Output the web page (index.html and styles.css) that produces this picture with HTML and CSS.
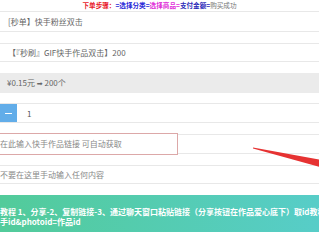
FILE: index.html
```html
<!DOCTYPE html>
<html lang="zh">
<head>
<meta charset="utf-8">
<link rel="stylesheet" href="styles.css">
</head>
<body>
<div class="page">
  <div class="steps"><span class="s-red">下单步骤：</span><span class="s-blue">=选择分类=</span><span class="s-pink">选择商品=</span><span class="s-navy">支付金额=</span><span class="s-gray">购买成功</span></div>
  <div class="row r1">[秒单】快手粉丝双击</div>
  <div class="gap"></div>
  <div class="row r2">【『秒刷』GIF快手作品双击】200</div>
  <div class="price-wrap">
    <div class="price">¥0.15元 <span class="arr">➡</span> 200个</div>
  </div>
  <div class="qty">
    <div class="minus"><span class="bar"></span></div>
    <div class="num">1</div>
  </div>
  <div class="link-wrap">
    <div class="link-box">在此输入快手作品链接 可自动获取</div>
    <div class="link-fill"></div>
  </div>
  <div class="row r3">不要在这里手动输入任何内容</div>
  <div class="tip-wrap">
    <div class="tip">
      <div class="tl">教程 1、分享-2、复制链接-3、通过聊天窗口粘贴链接（分享按钮在作品爱心底下）取id教程</div>
      <div class="tl">手id&amp;photoid=作品id</div>
    </div>
  </div>
  <svg class="arrow" width="319" height="240" viewBox="0 0 319 240"><polygon points="253,147.5 253,148.5 325,168.5 325,160.5" fill="#e63232"/></svg>
</div>
</body>
</html>
```

FILE: styles.css
```css
html, body { margin: 0; padding: 0; background: #fff; }
.page {
  position: relative;
  width: 319px;
  height: 240px;
  overflow: hidden;
  font-family: "Noto Sans CJK SC", "Noto Sans", sans-serif;
  font-size: 8px;
  color: #666;
}
.steps {
  height: 11px;
  line-height: 11px;
  text-align: center;
  font-size: 6.6px;
  font-weight: bold;
  border-bottom: 1px solid #e8e8e8;
}
.s-red { color: #e8202a; }
.s-blue { color: #2a2ad8; }
.s-pink { color: #e030d8; }
.s-navy { color: #2a2ab8; }
.s-gray { color: #777; font-weight: normal; }
.row {
  padding-left: 8px;
  border-bottom: 1px solid #e8e8e8;
  white-space: nowrap;
}
.r1 { height: 19px; line-height: 19px; }
.gap { height: 11px; border-bottom: 1px solid #e8e8e8; }
.r2 { height: 17px; line-height: 17px; }
.price-wrap {
  padding: 11px 0 10px;
  border-bottom: 1px solid #e8e8e8;
}
.price {
  height: 20px;
  line-height: 20px;
  background: #ebebeb;
  padding-left: 7px;
}
.arr { font-family: "DejaVu Sans", sans-serif; font-size: 7px; }
.qty {
  display: flex;
  align-items: center;
  height: 18px;
  border-bottom: 1px solid #e8e8e8;
}
.minus {
  width: 17px;
  height: 18px;
  background: #62ade9;
  display: flex;
  align-items: center;
  justify-content: center;
}
.bar { width: 7px; height: 1px; background: #fff; }
.num { padding-left: 10px; color: #555; }
.link-wrap {
  display: flex;
  padding: 10px 0;
  border-bottom: 1px solid #e8e8e8;
}
.link-box {
  width: 177px;
  height: 20px;
  line-height: 20px;
  border: 1px solid #dca8a8;
  border-left: none;
  color: #888;
  white-space: nowrap;
}
.link-fill {
  flex: 1;
  margin-top: 1px;
  height: 18px;
  border-top: 1px solid #e8e8e8;
  border-bottom: 1px solid #e8e8e8;
}
.r3 { height: 17px; line-height: 17px; padding-left: 0; color: #888; }
.tip-wrap { padding-top: 11px; }
.tip {
  height: 37px;
  box-sizing: border-box;
  padding-top: 12px;
  background: linear-gradient(90deg, #52cb9a, #57cdc8);
  color: #fff;
  font-weight: bold;
  line-height: 10px;
}
.tl { white-space: nowrap; overflow: hidden; }
.arrow { position: absolute; left: 0; top: 0; }
```
